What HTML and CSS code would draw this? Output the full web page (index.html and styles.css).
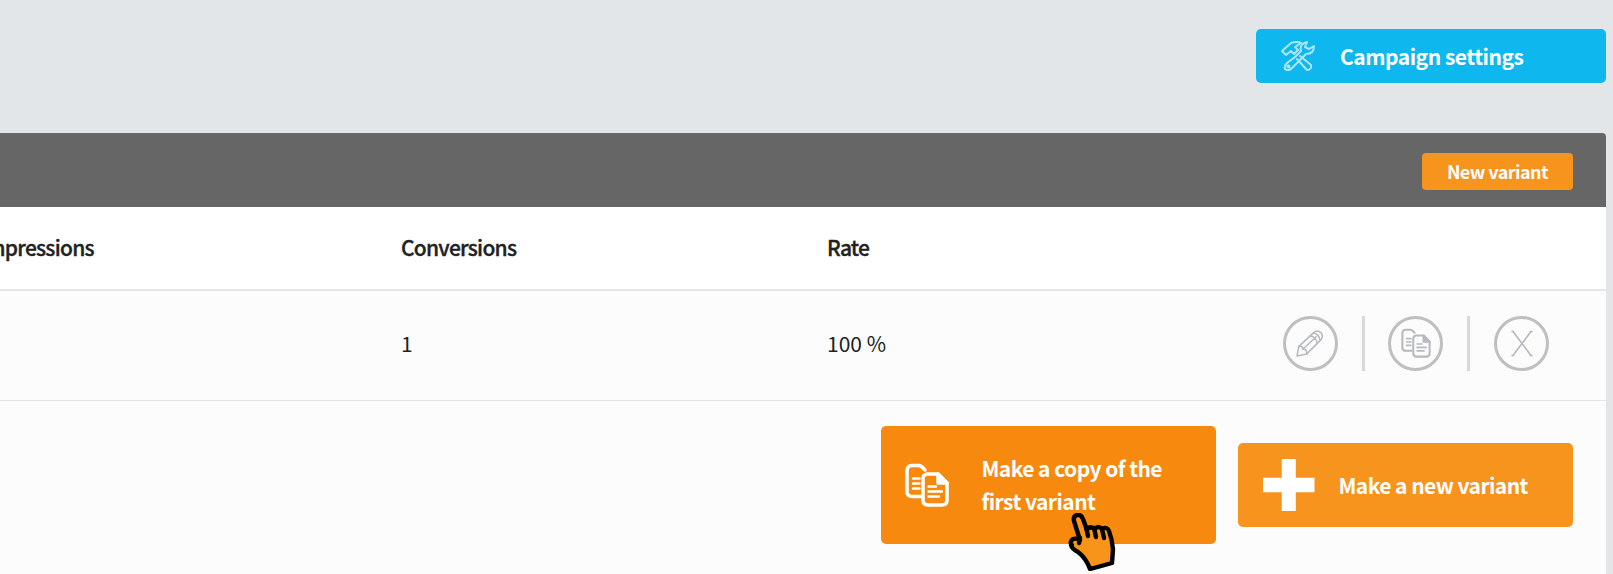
FILE: index.html
```html
<!DOCTYPE html>
<html lang="en">
<head>
<meta charset="utf-8"/>
<title>Campaign variants</title>
<link rel="stylesheet" href="styles.css">
</head>

<body>
	<!-- shared icons -->
	<svg class="sprite" width="0" height="0">
		<symbol id="copy" viewBox="0 0 44 44">
			<path d="M16 33.500H7Q2 33.500 2 28.500V8Q2 2.500 7 2.500H14Q17 3 20 7"/>
			<path d="M23 11H33L42 20V37Q42 42 37 42H23Q18 42 18 37V16Q18 11 23 11Z"/>
			<path class="fold" d="M33 11V20H42Z"/>
			<path class="thin" d="M8 15.500H14.500M8 20.500H14.500M8 25.500H14.500M23.500 23.500H31M23.500 28.500H37M23.500 33.500H34"/>
		</symbol>
	</svg>
	<div class="top-bar">
		<a class="btn btn-settings">
			<svg class="icon-tools" viewBox="0 0 34 30">
				<path d="M1 10L10 2Q16 0 20 2L14 6L17 9L13 13L10 10L5 14Z"/>
				<path d="M19 15L30 24Q31 29 26 29L16 18"/>
				<path d="M20 10Q18 3 26 1L24 6L28 8L33 5Q33 13 25 13L11 27Q7 31 4 28Q3 25 6 22L14 16Z"/>
				<circle cx="7.500" cy="25.500" r="1"/>
			</svg>
			<span>Campaign settings</span>
		</a>
	</div>
	<div class="panel">
		<div class="panel-head">
			<a class="btn btn-small">New variant</a>
		</div>
		<div class="row row-head">
			<div>Impressions</div>
			<div>Conversions</div>
			<div>Rate</div>
			<div></div>
		</div>
		<div class="row row-data">
			<div></div>
			<div>1</div>
			<div>100 %</div>
			<div class="actions">
				<a class="circle">
					<svg class="icon-pencil" viewBox="0 0 28 28">
						<path d="M1 27L3 17L18 3Q22 -1 26 3Q29 7 25 11L11 25L1 27Z"/>
						<path d="M3 17Q7 16 7 20Q12 20 11 25M7 20L21 7M15 6Q20 7 22 13M18 3Q24 4 25 11"/>
					</svg>
				</a>
				<i class="divider"></i>
				<a class="circle"><svg class="icon-copy-small"><use href="#copy"/></svg></a>
				<i class="divider"></i>
				<a class="circle">
					<svg class="icon-close" viewBox="0 0 24 27">
						<path d="M3 1.500L21 25.500M21 1.500L3 25.500M2 1.500H3.500M20.500 1.500H22M2 25.500H3.500M20.500 25.500H22"/>
					</svg>
				</a>
			</div>
		</div>
		<div class="panel-foot">
			<a class="btn btn-copy">
				<svg class="icon-copy"><use href="#copy"/></svg>
				<span>Make a copy of the<br>first variant</span>
				<svg class="hand" viewBox="0 0 48 58">
					<path d="M4 32Q1 29 5 26Q8 25 12 27L6 8Q5 3 9 2Q13 1 15 6L19 17Q21 13 25 15L27 16Q30 12 34 16Q39 13 41 18Q44 26 45 36L44 50L22 56Q18 45 10 39Q4 36 3 32Z"/>
					<path d="M18 14L20 23M26 15L28 24M34 16L36 25M12 25L11 30"/>
				</svg>
			</a>
			<a class="btn btn-new">
				<i class="plus"></i>
				<span>Make a new variant</span>
			</a>
		</div>
	</div>
</body>
</html>
```
FILE: styles.css
```css
*{padding: 0;margin: 0;box-sizing: border-box}
html{
	height: 100%;
}
body{
	height: 100%;
	background: #e2e6e9;
	color: #222;
	font-family: "Noto Sans CJK SC", "Noto Sans", sans-serif;
	font-size: 21px;
	overflow: hidden;
}
svg{
	display: block;
	fill: none;
	stroke: currentColor;
	stroke-linejoin: round;
	stroke-linecap: round;
}
.sprite{
	position: absolute;
}
.btn{
	display: flex;
	align-items: center;
	border-radius: 5px;
	background: #f7941e;
	color: #fff;
	font-weight: bold;
	letter-spacing: -0.55px;
	white-space: nowrap;
}
.top-bar{
	display: flex;
	justify-content: flex-end;
	height: 133px;
	padding: 29px 7px 0 0;
}
.btn-settings{
	width: 350px;
	height: 54px;
	padding: 0 0 1px 25px;
	background: #0eb8ee;
	letter-spacing: -0.48px;
}
.icon-tools{
	width: 34px;
	height: 30px;
	margin-right: 25px;
	stroke-width: 2;
	opacity: 0.65;
}
.panel{
	height: 441px;
	margin-right: 7px;
	background: #fcfcfc;
	border-top-right-radius: 4px;
	overflow: hidden;
}
.panel-head{
	display: flex;
	align-items: center;
	justify-content: flex-end;
	height: 74px;
	padding: 3px 33px 0 0;
	background: #666;
}
.btn-small{
	justify-content: center;
	width: 151px;
	height: 37px;
	padding-bottom: 2px;
	border-radius: 4px;
	font-size: 18px;
}
.row{
	display: grid;
	grid-template-columns: 421px 426px 426px 1fr;
	align-items: center;
	margin-left: -20px;
}
.row-head{
	height: 84px;
	padding-bottom: 3px;
	background: #fff;
	border-bottom: 2px solid #e4e7e9;
	font-weight: 500;
	letter-spacing: -0.75px;
	-webkit-text-stroke: 0.35px #222;
}
.row-data{
	height: 110px;
	padding-bottom: 5px;
	border-bottom: 1px solid #e2e4e5;
}
.actions{
	display: flex;
	align-items: center;
	gap: 23.7px;
	margin-left: 30px;
}
.circle{
	display: flex;
	align-items: center;
	justify-content: center;
	width: 55px;
	height: 55px;
	border: 3px solid #bfbfc0;
	border-radius: 50%;
	color: #b6babf;
}
.divider{
	width: 3px;
	height: 55px;
	background: #d9d9d9;
}
.icon-pencil{
	width: 27px;
	height: 27px;
	margin-right: 2px;
	stroke-width: 1.6;
}
.icon-copy-small{
	width: 30px;
	height: 30px;
	stroke-width: 3;
}
.icon-close{
	width: 24px;
	height: 27px;
	margin-left: 2px;
	stroke-width: 1.7;
}
.thin{
	stroke-width: 2.4;
}
.fold{
	fill: currentColor;
}
.panel-foot{
	display: flex;
	align-items: center;
	justify-content: flex-end;
	gap: 21.5px;
	padding: 25px 33px 0 0;
}
.btn-copy{
	position: relative;
	width: 335.5px;
	height: 118px;
	padding-left: 24px;
	background: #f78a0e;
	line-height: 33.5px;
}
.icon-copy{
	width: 44px;
	height: 44px;
	margin-right: 33px;
	stroke-width: 3.6;
}
.btn-new{
	width: 335.5px;
	height: 84px;
	padding-left: 25px;
}
.plus{
	width: 52px;
	height: 52px;
	margin-right: 24px;
	background: #fff;
	clip-path: polygon(37% 0, 64% 0, 64% 36%, 100% 36%, 100% 64%, 64% 64%, 64% 100%, 37% 100%, 37% 64%, 0 64%, 0 36%, 37% 36%);
}
/* pointer over the hovered button */
.hand{
	position: absolute;
	left: 187px;
	top: 87px;
	width: 48px;
	height: 58px;
	fill: #f9941a;
	stroke: #000;
	stroke-width: 4.4;
}
```
